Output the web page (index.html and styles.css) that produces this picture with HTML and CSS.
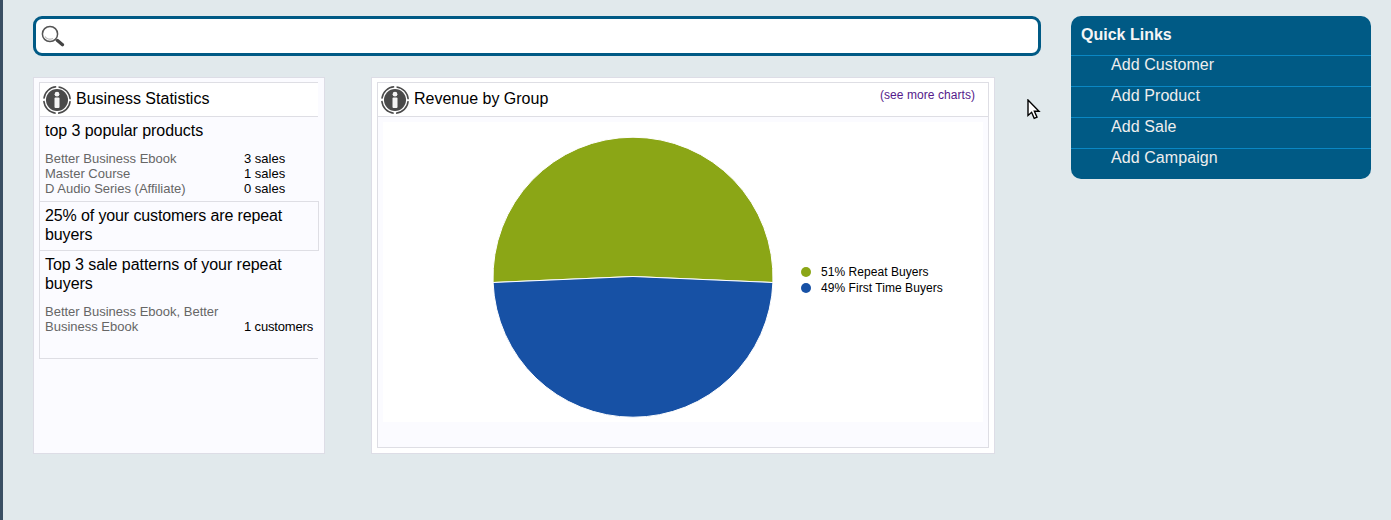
FILE: index.html
```html
<!DOCTYPE html>
<html lang="en">
<head>
<meta charset="utf-8">
<title>Dashboard</title>
<link rel="stylesheet" href="styles.css">
</head>
<body>
<div class="page">
  <main class="main">
    <div class="search">
      <svg class="search-icon" width="24" height="22" viewBox="0 0 24 22">
        <circle cx="9" cy="9" r="7.6" fill="#fff" stroke="#555" stroke-width="1.5"/>
        <path d="M4 11.5c1.500 2.500 5 3.500 8 2" fill="none" stroke="#bbb" stroke-width="1.2"/>
        <path d="M14.500 14.500l2 1.800" stroke="#666" stroke-width="1.500"/>
        <path d="M16.500 15.500l5 4.300" stroke="#444" stroke-width="3.200" stroke-linecap="round"/>
      </svg>
    </div>
    <div class="cards">
      <section class="card card-stats">
        <div class="widget widget-stats">
          <header class="widget-head">
            <svg class="info" width="28" height="28" viewBox="0 0 28 28">
              <circle cx="14" cy="14" r="13.200" fill="none" stroke="#4a4a4a" stroke-width="1.500" stroke-dasharray="18.300 2.430" stroke-dashoffset="-1.215"/>
              <circle cx="14" cy="14" r="11" fill="#4a4a4a"/>
              <circle cx="14" cy="8.200" r="2.400" fill="#f4f4f4"/>
              <rect x="11.500" y="11.600" width="5" height="10.400" rx="1" fill="#f4f4f4"/>
            </svg>
            <h2 class="widget-title">Business Statistics</h2>
          </header>
          <div class="stat">
            <h3 class="stat-title">top 3 popular products</h3>
            <div class="rows">
              <span class="label">Better Business Ebook</span><span class="value">3 sales</span>
              <span class="label">Master Course</span><span class="value">1 sales</span>
              <span class="label">D Audio Series (Affiliate)</span><span class="value">0 sales</span>
            </div>
          </div>
          <div class="stat-box">
            <h3 class="stat-title">25% of your customers are repeat buyers</h3>
          </div>
          <div class="stat stat-last">
            <h3 class="stat-title">Top 3 sale patterns of your repeat buyers</h3>
            <div class="rows">
              <span class="label">Better Business Ebook, Better Business Ebook</span><span class="value value-tight">1 customers</span>
            </div>
          </div>
        </div>
      </section>
      <section class="card card-chart">
        <div class="widget widget-chart">
          <header class="widget-head">
            <svg class="info" width="28" height="28" viewBox="0 0 28 28">
              <circle cx="14" cy="14" r="13.200" fill="none" stroke="#4a4a4a" stroke-width="1.500" stroke-dasharray="18.300 2.430" stroke-dashoffset="-1.215"/>
              <circle cx="14" cy="14" r="11" fill="#4a4a4a"/>
              <circle cx="14" cy="8.200" r="2.400" fill="#f4f4f4"/>
              <rect x="11.500" y="11.600" width="5" height="10.400" rx="1" fill="#f4f4f4"/>
            </svg>
            <h2 class="widget-title">Revenue by Group</h2>
            <a class="more" href="#">(see more charts)</a>
          </header>
          <div class="chart-wrap">
            <svg class="chart" width="600" height="300" viewBox="0 0 600 300">
              <rect width="600" height="300" fill="#fff"/>
              <path d="M250 154.500L110.100 160.500A140 140 0 1 1 389.900 160.500Z" fill="#8ba616" stroke="#fff" stroke-width="1"/>
              <path d="M250 154.500L389.900 160.500A140 140 0 0 1 110.100 160.500Z" fill="#1751a5" stroke="#fff" stroke-width="1"/>
              <circle cx="423" cy="150" r="5" fill="#8ba616"/>
              <circle cx="423" cy="166" r="5" fill="#1751a5"/>
              <text class="legend" x="438" y="154">51% Repeat Buyers</text>
              <text class="legend" x="438" y="170">49% First Time Buyers</text>
            </svg>
          </div>
        </div>
      </section>
    </div>
  </main>
  <aside class="links">
    <h2 class="links-title">Quick Links</h2>
    <a class="link" href="#">Add Customer</a>
    <a class="link" href="#">Add Product</a>
    <a class="link" href="#">Add Sale</a>
    <a class="link" href="#">Add Campaign</a>
  </aside>
  <svg class="cursor" width="14" height="21" viewBox="0 0 14 21">
    <path d="M1 1v15.500l3.600-3.200 2.600 6 2.800-1.200-2.600-5.800h4.600Z" fill="#fff" stroke="#000" stroke-width="1.400" stroke-linejoin="miter"/>
  </svg>
</div>
</body>
</html>
```
FILE: styles.css
```css
* { box-sizing: border-box; }
html, body { margin: 0; height: 100%; overflow: hidden; }
body {
  background: #e1e9ec;
  color: #000;
  font-family: "Liberation Sans", Arial, sans-serif;
  font-size: 13px;
}
.page {
  position: relative;
  display: flex;
  align-items: flex-start;
  gap: 30px;
  height: 520px;
  padding: 16px 20px 0 30px;
  border-left: 3px solid #3a4f63;
}
.main { width: 1008px; }
.search {
  display: flex;
  align-items: center;
  height: 40px;
  padding-left: 5px;
  background: #fff;
  border: 3px solid #005a85;
  border-radius: 9px;
}
.cards { display: flex; gap: 46px; margin-top: 21px; }
.card {
  height: 377px;
  padding: 4px 5px;
  background: #fbfbff;
  border: 1px solid #dddde6;
}
.card-stats { width: 292px; }
.card-chart { width: 624px; background: #fff; }
.widget { background: #fbfbff; }
.widget-stats {
  width: 279px;
  border-left: 1px solid #dedee4;
  border-bottom: 1px solid #dedee4;
}
.widget-chart { height: 366px; border: 1px solid #dedee4; }
.widget-head {
  display: flex;
  align-items: center;
  gap: 5px;
  height: 35px;
  padding-left: 3px;
  background: #fff;
  border-top: 1px solid #dedee4;
  border-bottom: 1px solid #dedee4;
}
.widget-chart .widget-head { height: 34px; border-top: 0; }
.widget-title {
  margin: 0 0 2px;
  font-size: 16px;
  font-weight: 400;
  line-height: 19px;
}
.info { flex: none; }
.more {
  align-self: flex-start;
  margin: 5px 13px 0 auto;
  color: #551a8b;
  font-size: 12px;
  line-height: 14px;
  letter-spacing: 0.06px;
  text-decoration: none;
}
.chart-wrap { padding: 5px; }
.chart { display: block; }
.legend {
  font-family: "Liberation Sans", Arial, sans-serif;
  font-size: 12px;
  letter-spacing: 0.05px;
  fill: #000;
}
.stat { padding: 4px 5px 5px; }
.stat-last { padding: 4px 5px 24px; }
.stat-box {
  padding: 4px 5px 5px;
  width: 280px;
  height: 50px;
  margin-left: -1px;
  border: 1px solid #dedee4;
}
.stat-title {
  margin: 0;
  font-size: 16px;
  font-weight: 400;
  line-height: 19px;
  letter-spacing: -0.05px;
}
.stat-box .stat-title { letter-spacing: -0.12px; }
.rows {
  display: grid;
  grid-template-columns: 199px auto;
  align-items: end;
  margin-top: 11px;
  line-height: 15px;
}
.label { color: #666; padding-right: 8px; }
.value { color: #000; white-space: nowrap; }
.value-tight { letter-spacing: -0.15px; }
.links {
  width: 300px;
  height: 163px;
  background: #005a85;
  border-radius: 10px;
  overflow: hidden;
}
.links-title {
  margin: 0;
  height: 39px;
  padding: 9px 10px 0;
  color: #f5f5f5;
  font-size: 16px;
  font-weight: 700;
  line-height: 19px;
}
.link {
  display: block;
  height: 31px;
  padding-left: 40px;
  border-top: 1px solid #0a87c4;
  color: #eee;
  font-size: 16px;
  line-height: 17px;
  letter-spacing: 0.08px;
  text-decoration: none;
}
.cursor { position: absolute; left: 1024px; top: 99px; }
```
